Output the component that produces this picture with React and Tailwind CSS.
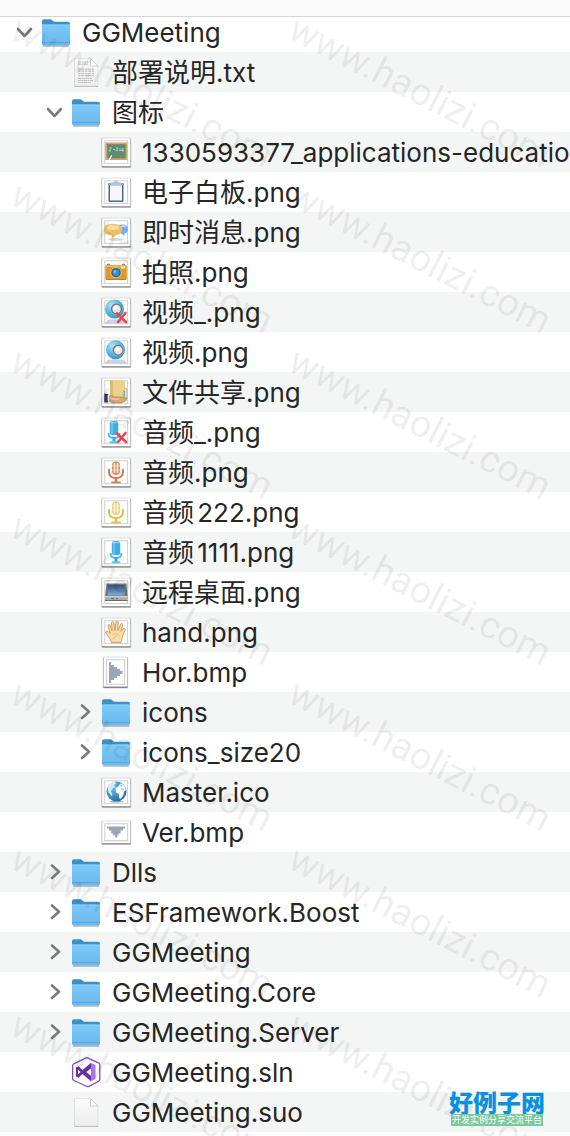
import React from "react";

const files = [
  { name: "GGMeeting", level: 0, icon: "folder", open: true },
  { name: "部署说明.txt", level: 1, icon: "text" },
  { name: "图标", level: 1, icon: "folder", open: true },
  { name: "1330593377_applications-education.png", level: 2, icon: "board" },
  { name: "电子白板.png", level: 2, icon: "clipboard" },
  { name: "即时消息.png", level: 2, icon: "chat" },
  { name: "拍照.png", level: 2, icon: "camera" },
  { name: "视频_.png", level: 2, icon: "webcamOff" },
  { name: "视频.png", level: 2, icon: "webcam" },
  { name: "文件共享.png", level: 2, icon: "share" },
  { name: "音频_.png", level: 2, icon: "micOff" },
  { name: "音频.png", level: 2, icon: "micOrange" },
  { name: "音频222.png", level: 2, icon: "micYellow" },
  { name: "音频1111.png", level: 2, icon: "micBlue" },
  { name: "远程桌面.png", level: 2, icon: "desktop" },
  { name: "hand.png", level: 2, icon: "hand" },
  { name: "Hor.bmp", level: 2, icon: "hor" },
  { name: "icons", level: 2, icon: "folder", open: false },
  { name: "icons_size20", level: 2, icon: "folder", open: false },
  { name: "Master.ico", level: 2, icon: "globe" },
  { name: "Ver.bmp", level: 2, icon: "ver" },
  { name: "Dlls", level: 1, icon: "folder", open: false },
  { name: "ESFramework.Boost", level: 1, icon: "folder", open: false },
  { name: "GGMeeting", level: 1, icon: "folder", open: false },
  { name: "GGMeeting.Core", level: 1, icon: "folder", open: false },
  { name: "GGMeeting.Server", level: 1, icon: "folder", open: false },
  { name: "GGMeeting.sln", level: 1, icon: "solution" },
  { name: "GGMeeting.suo", level: 1, icon: "blank" },
];

const indent = ["pl-2", "pl-[38px]", "pl-[68px]"];

const Folder = () => (
  <>
    <path d="M2 29h26" stroke="#000" strokeOpacity=".3" strokeWidth="1.5" />
    <path d="M1 4.200Q1 2.300 3 2.300h6.200q1 0 1.800.8l1 1Q12.700 4.800 13.700 4.800H27q2 0 2 2V26H1z" fill="#3e8ec8" />
    <path d="M1 7.700h28V26.500q0 2-2 2H3q-2 0-2-2z" fill="url(#folderFront)" />
    <path d="M1 8h28" stroke="#92d2fb" />
    <path d="M1 25.500h28" stroke="#57a5da" />
  </>
);

const Page = ({ children }) => (
  <>
    <path d="M3.500 1.500H19.500L27 9v20.300H3.500z" fill="#000" opacity=".25" transform="translate(0 .6)" />
    <path d="M3.500 1.500H19.500L27 9v20H3.500z" fill="url(#page)" stroke="#d9d9d9" strokeWidth=".6" />
    {children}
    <path d="M19.500 1.500V9H27z" fill="#fff" stroke="#bdbdbd" strokeWidth=".7" />
  </>
);

// White photo frame that image previews sit in
const Frame = ({ x = 1, y = 1, w = 28.5, h = 28.5, children }) => (
  <>
    <rect x={x - 0.7} y={y} width={w + 1.4} height={h + 1.5} rx="1" fill="#000" opacity=".2" />
    <rect x={x} y={y + 0.7} width={w} height={h} fill="#000" opacity=".5" />
    <rect x={x} y={y} width={w} height={h - 0.2} fill="#fff" stroke="#b0b0b0" strokeWidth=".4" />
    <rect x={x + 2.8} y={y + 2.8} width={w - 5.6} height={h - 5.6} fill="#fff" stroke="#c4c4c4" strokeWidth=".8" />
    {children}
  </>
);

const Cross = () => (
  <path d="M16 16.500l9 8.500M24.500 16l-7.500 9" stroke="#e5474a" strokeWidth="2.600" strokeLinecap="round" />
);

const Webcam = ({ cx, cy, lx, ly }) => (
  <>
    <path d="M4 26q1-3.500 6-3.500h9q5.500 0 7 3.500z" fill="#cfd0e6" />
    <circle cx={cx} cy={cy} r="9.500" fill="url(#ball)" />
    <circle cx={lx} cy={ly} r="5.800" fill="#fff" />
    <circle cx={lx} cy={ly} r="5" fill="#e4e6ea" stroke="#70757c" strokeWidth="1.500" />
    <circle cx={lx - 1} cy={ly - 1} r="2" fill="#fff" />
  </>
);

const Mic = ({ main, light, dark }) => (
  <>
    <path d="M8 12v3q0 6 7 6t7-6v-3" fill="none" stroke={dark} strokeWidth="2" />
    <path d="M15 21v4" stroke={dark} strokeWidth="2.800" />
    <path d="M11 25.300h8" stroke={dark} strokeWidth="1.800" strokeLinecap="round" />
    <rect x="11" y="4.500" width="8" height="13.500" rx="3.800" fill={main} />
    <path d="M13.500 6v10M16.500 6v10" stroke={light} strokeWidth="1.500" />
    <path d="M11 9h8M11 13h8" stroke={light} strokeWidth=".7" />
  </>
);

const BlueMic = ({ x = 0 }) => (
  <g transform={`translate(${x} 0)`}>
    <path d="M9.500 16q0 5 5.500 5t5.500-5" fill="none" stroke="#56bde8" strokeWidth="2" />
    <path d="M15 20v5" stroke="#39a9dc" strokeWidth="3" />
    <path d="M11.500 25.200h7" stroke="#62c3ea" strokeWidth="2" strokeLinecap="round" />
    <rect x="10.800" y="4" width="8.400" height="14" rx="2.500" fill="#3eaee4" />
    <path d="M13 5v12" stroke="#83d0f2" strokeWidth="1.200" />
    <path d="M11 5.500h8" stroke="#8ed7f4" strokeWidth="1.500" />
  </g>
);

const drawings = {
  folder: <Folder />,
  blank: <Page />,
  text: (
    <Page>
      <g stroke="#b4b4b4" strokeWidth="1.200" opacity=".8">
        <path d="M7 5h10M7 7.200h10" strokeDasharray="3 .5 1.500 .5" />
        <path d="M7 12.200h16M7 14.200h16M7 16.500h16M7 18.700h16" strokeDasharray="2 .4 4 .6" />
        <path d="M7 21.500h14M7 23.500h15M7 25.500h13" strokeDasharray="3 .5 2 .5" />
      </g>
    </Page>
  ),
  board: (
    <Frame>
      <rect x="4.300" y="5.500" width="22" height="17.500" fill="#cfa272" />
      <rect x="6.500" y="7.500" width="17.700" height="13.500" fill="#5d8e72" stroke="#8b7a50" strokeWidth=".6" />
      <path d="M8.500 11q2-1.500 1.500.5l-2 2.500h2M12 12.500h2M15 11q2-1 1.500.7l-1.500 2h2M18 12h1.800M18 13.300h1.800M22 15v-4l-2 2.500h2.500" fill="none" stroke="#c3d9cb" strokeWidth=".8" />
      <path d="M8 23l2.700-4.500" stroke="#fff" strokeWidth="1.400" />
    </Frame>
  ),
  clipboard: (
    <Frame>
      <rect x="7.500" y="6" width="15" height="19" rx="1" fill="#45698f" />
      <rect x="9" y="8" width="12" height="15.500" fill="#f6f7f8" />
      <path d="M7.500 6h15v2h-15z" fill="#7ea2c8" />
      <path d="M10 8.800V6q0-.8 1.500-.8h1q.5-1.200 2.500-1.200t2.500 1.200h1q1.500 0 1.500.8v2.800z" fill="#b5c4d4" />
    </Frame>
  ),
  chat: (
    <Frame>
      <ellipse cx="15" cy="22.500" rx="8" ry="1.500" fill="#bbb" opacity=".6" />
      <path d="M15 12q0-4.500 6-4.500t6 4.500q0 4-3.500 4.500l-.5 2.500-2.500-2.500Q15 16 15 12z" fill="#79a9ef" />
      <path d="M19.500 10q2.500-1.500 5.500-.5" stroke="#bcd7fb" strokeWidth="1.800" fill="none" />
      <path d="M3 12.800q0-6 9-6T21 12.800q0 4.500-6 5.300L11 21.500v-3.200Q3 17.800 3 12.800z" fill="#edbf62" />
      <ellipse cx="11.500" cy="10.500" rx="6.500" ry="2.600" fill="#f8dc9a" />
    </Frame>
  ),
  camera: (
    <Frame>
      <path d="M6 7.500h3M21 7.500h3" stroke="#8a8a80" strokeWidth="1.600" />
      <rect x="4.300" y="8" width="21.500" height="15" rx="1.500" fill="#dd9a2c" />
      <path d="M5 9.200h20" stroke="#f3c25c" strokeWidth="1.500" />
      <path d="M5 22.500h20" stroke="#c27f1c" />
      <rect x="20" y="9.500" width="4" height="2" fill="#fbf0cb" />
      <circle cx="15" cy="15.700" r="5.600" fill="#d4ccb6" />
      <circle cx="15" cy="15.700" r="4.800" fill="#3e6279" />
      <circle cx="15" cy="15.700" r="3.300" fill="#3f93cc" />
      <circle cx="14" cy="14.500" r="1.200" fill="#84c4ea" />
    </Frame>
  ),
  webcamOff: (
    <Frame>
      <Webcam cx={13.5} cy={12} lx={15.5} ly={12} />
      <Cross />
    </Frame>
  ),
  webcam: (
    <Frame>
      <Webcam cx={14.5} cy={12.8} lx={17.2} ly={13.2} />
    </Frame>
  ),
  share: (
    <Frame>
      <path d="M9 3.500h15v18H9z" fill="#ead18c" />
      <path d="M9 3.500h3v18H9z" fill="#dcbb6c" />
      <path d="M22.500 14l2-3 1.500 1v9h-3.500z" fill="#f7ecbe" stroke="#bd9a4c" strokeWidth=".6" />
      <path d="M23.500 14v6" stroke="#68aee2" strokeWidth="1.200" />
      <path d="M6.500 19.500q4-2 7.500.5h5l7 1.200q-1 4.300-6.500 4.700H12q-3-1.500-5.500-1.500z" fill="#dba677" stroke="#9f6f42" strokeWidth=".5" />
      <path d="M10 22h8" stroke="#f1cda6" strokeWidth="1.300" />
      <path d="M3.300 16.500l4 .5v8.500h-4z" fill="#33385e" />
      <path d="M7.300 18v6.500" stroke="#fff" strokeWidth="1.200" />
    </Frame>
  ),
  micOff: (
    <Frame>
      <BlueMic x={-2} />
      <Cross />
    </Frame>
  ),
  micOrange: (
    <Frame>
      <Mic main="#dc9066" light="#fbe8da" dark="#cf8059" />
    </Frame>
  ),
  micYellow: (
    <Frame>
      <Mic main="#e5cf80" light="#fdf8e2" dark="#dfc055" />
    </Frame>
  ),
  micBlue: (
    <Frame>
      <BlueMic />
    </Frame>
  ),
  desktop: (
    <Frame>
      <path d="M5.500 6.500h20l1.200 14H4z" fill="#6f7276" />
      <path d="M6.800 8h17v10.500h-17z" fill="url(#screen)" />
      <path d="M4 19.500h22.700v4H4z" fill="#aaaaa8" />
      <path d="M4 19.700h22.700" stroke="#dedede" />
      <path d="M4 23.500h22.700" stroke="#6d6d6d" />
      <path d="M10 21.700h3M15 21.700h2" stroke="#686868" />
      <circle cx="23.500" cy="21.700" r=".8" fill="#efb63c" />
    </Frame>
  ),
  hand: (
    <Frame>
      <path
        d="M10.500 25.500Q9 21 6.500 18.500L4.500 15q1-1.800 3-.2l1.500 1.500L7 9q.3-2 2-1l2.200 6-.7-8.500q1-2 2.300 0L14 13.500l1-9q1.300-1.300 2.200.3l-.2 9 2.800-7q1.700-.8 1.900 1L20 14.500l2.500-3q2-.3 1.700 1.300l-2.700 6.700q-1 3-1.500 6z"
        fill="#f8dda9"
        stroke="#c08a52"
        strokeWidth=".8"
      />
      <path d="M11.500 18q4-2.500 7 .5M12 22.500q1-3 4-4" fill="none" stroke="#e5b878" strokeWidth=".8" />
    </Frame>
  ),
  hor: (
    <Frame x={2.5} y={0} w={24} h={30}>
      <path d="M8 5h2v3h3v2h3v2h3v2h2.500v3H19v2h-3v2h-3v2h-3v3H8z" fill="#9ba6b8" />
    </Frame>
  ),
  ver: (
    <Frame x={1} y={4} w={28.5} h={22.5}>
      <path d="M6 9.500h18v2h-2v2h-2.500v3h-2v2h-1.300v2h-2v-2h-2v-2h-2v-3H8v-2H6z" fill="#9ba6b8" />
    </Frame>
  ),
  globe: (
    <Frame>
      <ellipse cx="15.500" cy="24.500" rx="7" ry="1" fill="#aaa" />
      <circle cx="15.500" cy="14.500" r="10" fill="url(#globe)" />
      <path d="M6.500 10q2-4.500 6.500-5.300l2.500 1.500-2.500 2 1 2-3 1.500-1 3 1.500 2.500-1 2-3-4z" fill="#d6edf8" />
      <path d="M14.500 11l3.500-2 1-2.500 2.500.2q3 3 3.600 6.300l-2 1.500-.8 4-2.800 3.500-1.500-1v-4l-3-1.500z" fill="#f5fafc" />
      <path d="M20 12l3 .5M19 9h2" stroke="#60a7cf" strokeWidth=".8" />
    </Frame>
  ),
  solution: (
    <>
      <path d="M15 .8q.7-.3 1.500 0l11 5q1.300.7 1.300 2v14.500q0 1.300-1.200 2l-9.600 5q-1 .5-2 .2L3 23.500q-1.400-.7-1.400-2V9q0-1.500 1.200-2.200z" fill="#fff" stroke="#804ac4" strokeWidth="1.300" />
      <path d="M20 6l4.500 2v14L20 24.300z" fill="#a778e5" />
      <path d="M20 5.800v5.800l-5 3.500 5 3.600v5.600L11.500 17 7.500 20.700 5 19.500v-9l2.500-1.200 4 3.700zM7 12.700v4.600l2.500-2.300z" fill="#6531a4" fillRule="evenodd" />
    </>
  ),
};

const FileIcon = ({ type }) => (
  <svg viewBox="0 0 30 30" className="w-[30px] h-[30px] shrink-0 overflow-visible" fill="none" aria-hidden="true">
    {drawings[type]}
  </svg>
);

const Gradients = () => (
  <svg className="absolute w-0 h-0" aria-hidden="true">
    <defs>
      <linearGradient id="folderFront" x1="0" y1="0" x2="0" y2="1">
        <stop offset="0" stopColor="#7bc8f9" />
        <stop offset="1" stopColor="#6bb9ed" />
      </linearGradient>
      <linearGradient id="page" x1="0" y1="0" x2="0" y2="1">
        <stop offset="0" stopColor="#fbfbfb" />
        <stop offset="1" stopColor="#ededed" />
      </linearGradient>
      <radialGradient id="ball" cx=".35" cy=".3" r=".8">
        <stop offset="0" stopColor="#b5e4f8" />
        <stop offset=".5" stopColor="#53b8e6" />
        <stop offset="1" stopColor="#2d8fca" />
      </radialGradient>
      <radialGradient id="globe" cx=".3" cy=".3" r=".8">
        <stop offset="0" stopColor="#73bfe6" />
        <stop offset="1" stopColor="#1b68a5" />
      </radialGradient>
      <linearGradient id="screen" x1="0" y1="0" x2="0" y2="1">
        <stop offset="0" stopColor="#31507f" />
        <stop offset="1" stopColor="#86abd9" />
      </linearGradient>
    </defs>
  </svg>
);

const Toggle = ({ open, name }) => (
  <button
    type="button"
    aria-label={`${open ? "Collapse" : "Expand"} ${name}`}
    className="flex items-center justify-center w-full h-full"
  >
    <svg viewBox="0 0 16 16" className="w-4 h-4" fill="none" stroke="#7b7b7b" strokeWidth="2.600" strokeLinecap="round" strokeLinejoin="round">
      {open ? <path d="M1 5l6.500 7L14 5" /> : <path d="M5 1.500l7 6.300L5 14" />}
    </svg>
  </button>
);

const FileRow = ({ file }) => (
  <li className={`flex items-center h-10 even:bg-[#f4f5f5] ${indent[file.level]}`}>
    <span className="w-[33px] h-10 shrink-0">
      {file.open !== undefined && <Toggle open={file.open} name={file.name} />}
    </span>
    <FileIcon type={file.icon} />
    <span className="ml-[11px] pt-0.5 text-[26px] leading-10 whitespace-nowrap text-[#262626] [text-autospace:normal]">
      {file.name}
    </span>
  </li>
);

const Watermark = () => (
  <div className="absolute inset-0 overflow-hidden pointer-events-none" aria-hidden="true">
    <div className="grid grid-cols-[278px_278px] auto-rows-[166px] pt-2 pl-[14px]">
      {Array.from({ length: 14 }, (_, i) => (
        <span
          key={i}
          className="origin-top-left rotate-[27deg] pl-2 text-[38px] leading-8 whitespace-nowrap text-black/8 font-[Roboto,sans-serif]"
        >
          www.haolizi.com
        </span>
      ))}
    </div>
  </div>
);

const SiteLogo = () => (
  <div className="absolute right-[25px] bottom-[10px] flex flex-col items-center font-['Noto_Sans_CJK_SC',sans-serif]">
    <span className="text-2xl leading-6 font-black text-[#0b90e0]">好例子网</span>
    <span className="px-px bg-[#7cc79b] text-[9px] leading-3 text-white whitespace-nowrap">
      开发实例分享交流平台
    </span>
  </div>
);

const App = () => {
  return (
    <main className="relative overflow-hidden bg-white pb-1 font-[Inter,'Noto_Sans_CJK_SC',sans-serif]">
      <Gradients />
      <div className="relative z-10 h-[17px] bg-[#fbfbfb] border-b border-[#d6d6d6]" />
      {/* List is scrolled a little under the header */}
      <ul className="-mt-[5px]">
        {files.map((file, i) => (
          <FileRow key={i} file={file} />
        ))}
      </ul>
      <Watermark />
      <SiteLogo />
    </main>
  );
};

export default App;
